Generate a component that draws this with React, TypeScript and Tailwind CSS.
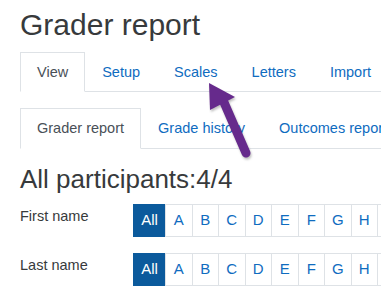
import React from "react";

const font = { fontFamily: '"Liberation Sans", Arial, sans-serif' };

const topTabs = ["View", "Setup", "Scales", "Letters", "Import", "Export"];
const subTabs = ["Grader report", "Grade history", "Outcomes report"];
const letters = ["A", "B", "C", "D", "E", "F", "G", "H", "I"];

const Tabs = ({ items, rowClass }: { items: string[]; rowClass: string }) => (
    <div className="flex border-b border-[#dee2e6] whitespace-nowrap">
        {items.map((t, i) => (
            <div
                key={t}
                className={`-mb-px border text-[14.5px] ${rowClass} ${
                    i === 0
                        ? "border-[#dee2e6] border-b-white bg-white text-[#495057]"
                        : "border-transparent text-[#0f6cbf]"
                }`}
            >
                {t}
            </div>
        ))}
    </div>
);

const LetterBar = ({ label }: { label: string }) => (
    <div className="flex">
        <div className="w-[113px] shrink-0 pt-[3px] text-[14.5px] leading-[18px] text-[#373a3c]">{label}</div>
        <div className="flex">
            <div className="flex h-[33px] w-[33px] items-center justify-center bg-[#0b5a9c] text-[15px] text-white">All</div>
            {letters.map((l) => (
                <div
                    key={l}
                    className="-ml-px flex h-[33px] w-[27.5px] shrink-0 items-center justify-center border border-[#dee2e6] text-[15px] text-[#0f6cbf] first:ml-0"
                >
                    {l}
                </div>
            ))}
        </div>
    </div>
);

export default function App() {
    return (
        <div className="relative h-[296px] w-[381px] overflow-hidden bg-white pl-5 pt-[7px]" style={font}>
            <h1 className="text-[30px] leading-[36px] text-[#373a3c]">Grader report</h1>

            <div className="mt-[9px]">
                <Tabs items={topTabs} rowClass="px-4 py-[10px] leading-[18px]" />
            </div>

            <div className="mt-4">
                <Tabs items={subTabs} rowClass="px-4 py-[10px] leading-[19px]" />
            </div>

            <h2 className="mt-[15px] text-[26px] leading-[31px] text-[#373a3c]">All participants:4/4</h2>

            <div className="mt-[9px] flex flex-col gap-4">
                <LetterBar label="First name" />
                <LetterBar label="Last name" />
            </div>

            {/* purple arrow pointing at Scales */}
            <svg className="absolute left-0 top-0" width="381" height="296" style={{ filter: "drop-shadow(1px 2px 1px rgba(0,0,0,0.25))" }}>
                <line x1="223" y1="100" x2="246" y2="153" stroke="#662a8c" strokeWidth="9" strokeLinecap="round" />
                <polygon points="209,83 210,110 235,97" fill="#662a8c" />
            </svg>
        </div>
    );
}
